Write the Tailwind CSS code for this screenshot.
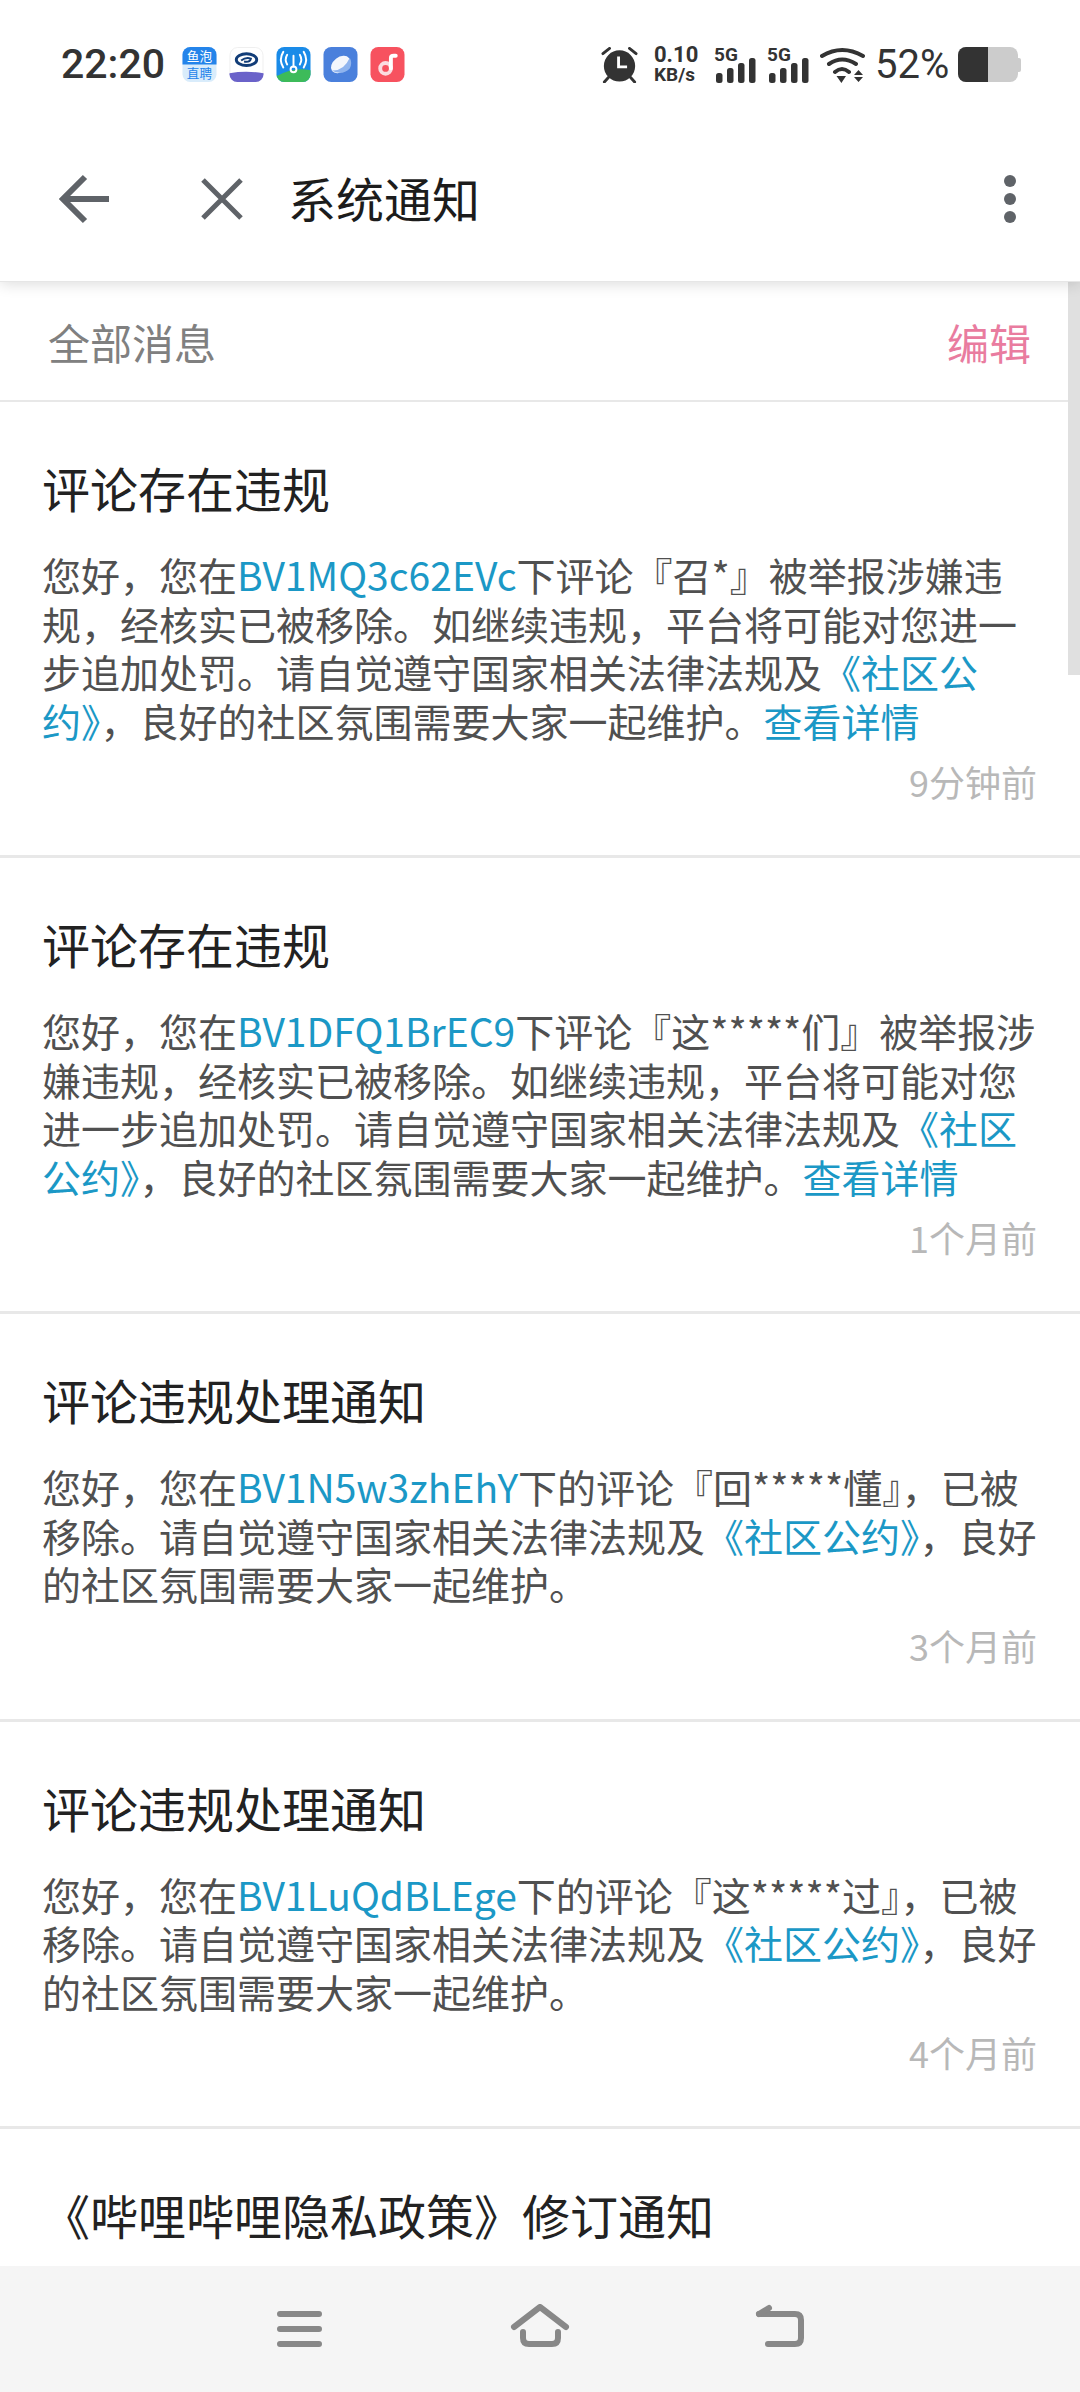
<!DOCTYPE html>
<html lang="zh-CN">
<head>
    <meta charset="UTF-8">
    <meta name="viewport" content="width=device-width, initial-scale=1.0">
    <title>系统通知</title>
    <script src="https://cdn.jsdelivr.net/npm/@tailwindcss/browser@4"></script>
</head>
<body class="bg-white">
<div class="relative w-[1080px] h-[2392px] overflow-hidden flex flex-col bg-white font-['Noto_Sans_CJK_SC','Noto_Sans',sans-serif]">

    <!-- status bar + toolbar -->
    <header class="relative z-10 bg-white shadow-[0_2px_14px_rgba(0,0,0,0.14)] border-b border-[#e6e6e6]">
        <div class="h-[116px] pt-[47px] pl-[61px] pr-[59px] flex items-start justify-between text-[#333]">
            <div class="flex items-start">
                <span class="w-[105px] mr-[16px] h-[35px] flex items-center text-[41px] font-medium font-['Roboto',sans-serif]">22:20</span>
                <div class="flex gap-[12px]">
                    <svg width="35" height="35" viewBox="0 0 35 36">
                        <rect width="35" height="36" rx="8" fill="#d9ecfb"/>
                        <path d="M0 8a8 8 0 0 1 8-8h19a8 8 0 0 1 8 8v10H0z" fill="#2484ea"/>
                        <text x="17.500" y="14" font-size="13" text-anchor="middle" fill="#fff" font-family="Noto Sans CJK SC">鱼泡</text>
                        <text x="17.500" y="32" font-size="13" text-anchor="middle" fill="#2484ea" font-family="Noto Sans CJK SC">直聘</text>
                    </svg>
                    <svg width="35" height="35" viewBox="0 0 35 36">
                        <rect x="0.500" y="0.500" width="34" height="35" rx="8" fill="#fff" stroke="#eee"/>
                        <path d="M0 27q17-3 35 0v1a8 8 0 0 1-8 8H8a8 8 0 0 1-8-8z" fill="#6a62c9"/>
                        <ellipse cx="17.500" cy="13" rx="10.500" ry="6" fill="none" stroke="#123d78" stroke-width="3"/>
                        <path d="M12 14q5-4 10-2-1 4-7 3" fill="none" stroke="#123d78" stroke-width="2"/>
                    </svg>
                    <svg width="35" height="35" viewBox="0 0 35 36">
                        <rect width="35" height="36" rx="8" fill="#1a8be8"/>
                        <path d="M0 30q18-10 35-6v4a8 8 0 0 1-8 8H8a8 8 0 0 1-8-8z" fill="#3dbb5a"/>
                        <g fill="none" stroke="#fff" stroke-width="2" stroke-linecap="round">
                            <circle cx="17.500" cy="23" r="3"/>
                            <path d="M17.500 9v11M11 8q-3 5 0 10M24 8q3 5 0 10M7 5q-5 8 0 16M28 5q5 8 0 16"/>
                        </g>
                    </svg>
                    <svg width="35" height="35" viewBox="0 0 35 36">
                        <rect width="35" height="36" rx="8" fill="#4a80dc"/>
                        <ellipse cx="17.500" cy="18" rx="11" ry="7.500" transform="rotate(-38 17.500 18)" fill="#f3f6fc"/>
                        <path d="M8 24q13 1 19-13 3 5 0 11-8 8-19 2z" fill="#8fb4ee"/>
                    </svg>
                    <svg width="35" height="35" viewBox="0 0 35 36">
                        <rect width="35" height="36" rx="8" fill="#f7525f"/>
                        <circle cx="15.500" cy="22" r="5.500" fill="none" stroke="#fbdce0" stroke-width="4"/>
                        <path d="M21 22V11q0-2 3-2h2" fill="none" stroke="#fff" stroke-width="4" stroke-linecap="round"/>
                    </svg>
                </div>
            </div>
            <div class="flex items-start">
                <!-- alarm -->
                <svg width="37" height="36" viewBox="0 0 38 38" class="mr-[16px]">
                    <circle cx="19" cy="20" r="16.500" fill="#333"/>
                    <path d="M18 10v11h9" fill="none" stroke="#fff" stroke-width="3"/>
                    <path d="M1.500 7l7-5.500M36.500 7l-7-5.500M3 37l4.500-5M35 37l-4.500-5" stroke="#333" stroke-width="3" stroke-linecap="round"/>
                </svg>
                <div class="w-[46px] mr-[14px] -mt-[2px] flex flex-col font-bold font-['Roboto',sans-serif] text-[#333]">
                    <span class="text-[22px] leading-[20px]">0.10</span>
                    <span class="text-[19px] leading-[20px]">KB/s</span>
                </div>
                <!-- signal 1 -->
                <div class="relative w-[42px] h-[36px] mr-[11px]">
                    <span class="absolute left-0 -top-[2px] text-[19px] leading-[19px] font-bold font-['Roboto',sans-serif]">5G</span>
                    <svg width="42" height="36" viewBox="0 0 42 36">
                        <rect x="2" y="26" width="6.500" height="10" rx="2.500" fill="#333"/>
                        <rect x="13" y="21" width="6.500" height="15" rx="2.500" fill="#333"/>
                        <rect x="24" y="16" width="6.500" height="20" rx="2.500" fill="#333"/>
                        <rect x="35" y="11" width="6.500" height="25" rx="2.500" fill="#333"/>
                    </svg>
                </div>
                <!-- signal 2 -->
                <div class="relative w-[42px] h-[36px] mr-[11px]">
                    <span class="absolute left-0 -top-[2px] text-[19px] leading-[19px] font-bold font-['Roboto',sans-serif]">5G</span>
                    <svg width="42" height="36" viewBox="0 0 42 36">
                        <rect x="2" y="26" width="6.500" height="10" rx="2.500" fill="#333"/>
                        <rect x="13" y="21" width="6.500" height="15" rx="2.500" fill="#333"/>
                        <rect x="24" y="16" width="6.500" height="20" rx="2.500" fill="#333"/>
                        <rect x="35" y="11" width="6.500" height="25" rx="2.500" fill="#333"/>
                    </svg>
                </div>
                <!-- wifi -->
                <svg width="46" height="36" viewBox="0 0 46 36" class="mr-[9px]">
                    <g fill="none" stroke="#333" stroke-width="4" stroke-linecap="round">
                        <path d="M2 9Q22-3 43 9M9 17Q22 8 36 17M15 25Q22 19 29 25"/>
                    </g>
                    <path d="M16.500 29H26l-4.600 7zM34 28l4.500-5 4.500 5zM34 30h9l-4.500 5z" fill="#333"/>
                </svg>
                <span class="w-[74px] mr-[9px] h-[35px] flex items-center text-[40px] font-['Roboto',sans-serif]">52%</span>
                <!-- battery -->
                <div class="flex items-center">
                    <div class="w-[60px] h-[35px] rounded-[8px] overflow-hidden bg-[#cccccc]">
                        <div class="w-[30px] h-full bg-[#333]"></div>
                    </div>
                    <div class="w-[3px] h-[14px] bg-[#cccccc] rounded-r-[2px]"></div>
                </div>
            </div>
        </div>
        <div class="h-[165px] relative flex items-center">
            <svg width="50" height="50" viewBox="0 0 50 50" class="ml-[59px]">
                <path d="M50 25H5M26 3L4 25l22 22" fill="none" stroke="#5f6368" stroke-width="6"/>
            </svg>
            <svg width="44" height="44" viewBox="0 0 44 44" class="ml-[91px]">
                <path d="M3 3l38 38M41 3L3 41" fill="none" stroke="#5f6368" stroke-width="5"/>
            </svg>
            <h1 class="ml-[44px] mb-[4px] text-[48px] leading-[64px] text-[#1c1c1c]">系统通知</h1>
            <div class="ml-auto mr-[64px] flex flex-col gap-[6px]">
                <span class="w-[12px] h-[12px] rounded-full bg-[#5f6368]"></span>
                <span class="w-[12px] h-[12px] rounded-full bg-[#5f6368]"></span>
                <span class="w-[12px] h-[12px] rounded-full bg-[#5f6368]"></span>
            </div>
        </div>
    </header>

    <main class="relative flex-1 overflow-hidden">
        <!-- scrollbar thumb -->
        <div class="absolute right-0 top-0 w-[12px] h-[393px] bg-[#e0e0e0]"></div>

        <div class="h-[120px] pl-[48px] pr-[49px] flex items-center justify-between border-b-2 border-[#e8e8e8] text-[42px]">
            <span class="text-[#808080]">全部消息</span>
            <span class="text-[#e97c9f]">编辑</span>
        </div>

        <article class="pl-[42px] pr-[43px] pt-[53px] pb-[50px] border-b-[3px] border-[#e8e8e8]">
            <h2 class="text-[48px] leading-[64px] text-[#222]">评论存在违规</h2>
            <p class="mt-[31px] text-[39px] leading-[48.500px] text-[#505050] whitespace-nowrap">您好，您在<span class="text-[#1b98c6]">BV1MQ3c62EVc</span>下评论『召*』被举报涉嫌违<br>规，经核实已被移除。如继续违规，平台将可能对您进一<br>步追加处罚。请自觉遵守国家相关法律法规及<span class="text-[#1b98c6]">《社区公<br>约》</span>，良好的社区氛围需要大家一起维护。<span class="text-[#1b98c6]">查看详情</span></p>
            <div class="mt-[13px] text-right text-[36px] leading-[48px] text-[#b8b8b8]">9分钟前</div>
        </article>

        <article class="pl-[42px] pr-[43px] pt-[53px] pb-[50px] border-b-[3px] border-[#e8e8e8]">
            <h2 class="text-[48px] leading-[64px] text-[#222]">评论存在违规</h2>
            <p class="mt-[31px] text-[39px] leading-[48.500px] text-[#505050] whitespace-nowrap">您好，您在<span class="text-[#1b98c6]">BV1DFQ1BrEC9</span>下评论『这*****们』被举报涉<br>嫌违规，经核实已被移除。如继续违规，平台将可能对您<br>进一步追加处罚。请自觉遵守国家相关法律法规及<span class="text-[#1b98c6]">《社区<br>公约》</span>，良好的社区氛围需要大家一起维护。<span class="text-[#1b98c6]">查看详情</span></p>
            <div class="mt-[13px] text-right text-[36px] leading-[48px] text-[#b8b8b8]">1个月前</div>
        </article>

        <article class="pl-[42px] pr-[43px] pt-[53px] pb-[50px] border-b-[3px] border-[#e8e8e8]">
            <h2 class="text-[48px] leading-[64px] text-[#222]">评论违规处理通知</h2>
            <p class="mt-[31px] text-[39px] leading-[48.500px] text-[#505050] whitespace-nowrap">您好，您在<span class="text-[#1b98c6]">BV1N5w3zhEhY</span>下的评论『回*****懂』，已被<br>移除。请自觉遵守国家相关法律法规及<span class="text-[#1b98c6]">《社区公约》</span>，良好<br>的社区氛围需要大家一起维护。</p>
            <div class="mt-[13px] text-right text-[36px] leading-[48px] text-[#b8b8b8]">3个月前</div>
        </article>

        <article class="pl-[42px] pr-[43px] pt-[53px] pb-[50px] border-b-[3px] border-[#e8e8e8]">
            <h2 class="text-[48px] leading-[64px] text-[#222]">评论违规处理通知</h2>
            <p class="mt-[31px] text-[39px] leading-[48.500px] text-[#505050] whitespace-nowrap">您好，您在<span class="text-[#1b98c6]">BV1LuQdBLEge</span>下的评论『这*****过』，已被<br>移除。请自觉遵守国家相关法律法规及<span class="text-[#1b98c6]">《社区公约》</span>，良好<br>的社区氛围需要大家一起维护。</p>
            <div class="mt-[13px] text-right text-[36px] leading-[48px] text-[#b8b8b8]">4个月前</div>
        </article>

        <article class="pl-[42px] pr-[43px] pt-[53px]">
            <h2 class="text-[48px] leading-[64px] text-[#222]">《哔哩哔哩隐私政策》修订通知</h2>
        </article>
    </main>

    <!-- system nav -->
    <nav class="h-[126px] shrink-0 bg-[#f5f5f5] flex justify-center items-start pt-[38px] gap-[180px]">
        <svg width="60" height="46" viewBox="0 0 60 46">
            <path d="M10 10h39M10 25h39M10 40h39" fill="none" stroke="#888" stroke-width="6" stroke-linecap="round"/>
        </svg>
        <svg width="60" height="46" viewBox="0 0 60 46">
            <path d="M4 23L30 3l26 20" fill="none" stroke="#888" stroke-width="6" stroke-linecap="round" stroke-linejoin="round"/>
            <path d="M13 28v6q0 6 6 6h23q6 0 6-6v-6" fill="none" stroke="#888" stroke-width="6" stroke-linecap="round"/>
        </svg>
        <svg width="60" height="46" viewBox="0 0 60 46">
            <path d="M9 10h36q6 0 6 6v18q0 6-6 6H18" fill="none" stroke="#888" stroke-width="6" stroke-linecap="round"/>
            <path d="M9 10l10-6" fill="none" stroke="#888" stroke-width="6" stroke-linecap="round"/>
        </svg>
    </nav>
</div>
</body>
</html>
